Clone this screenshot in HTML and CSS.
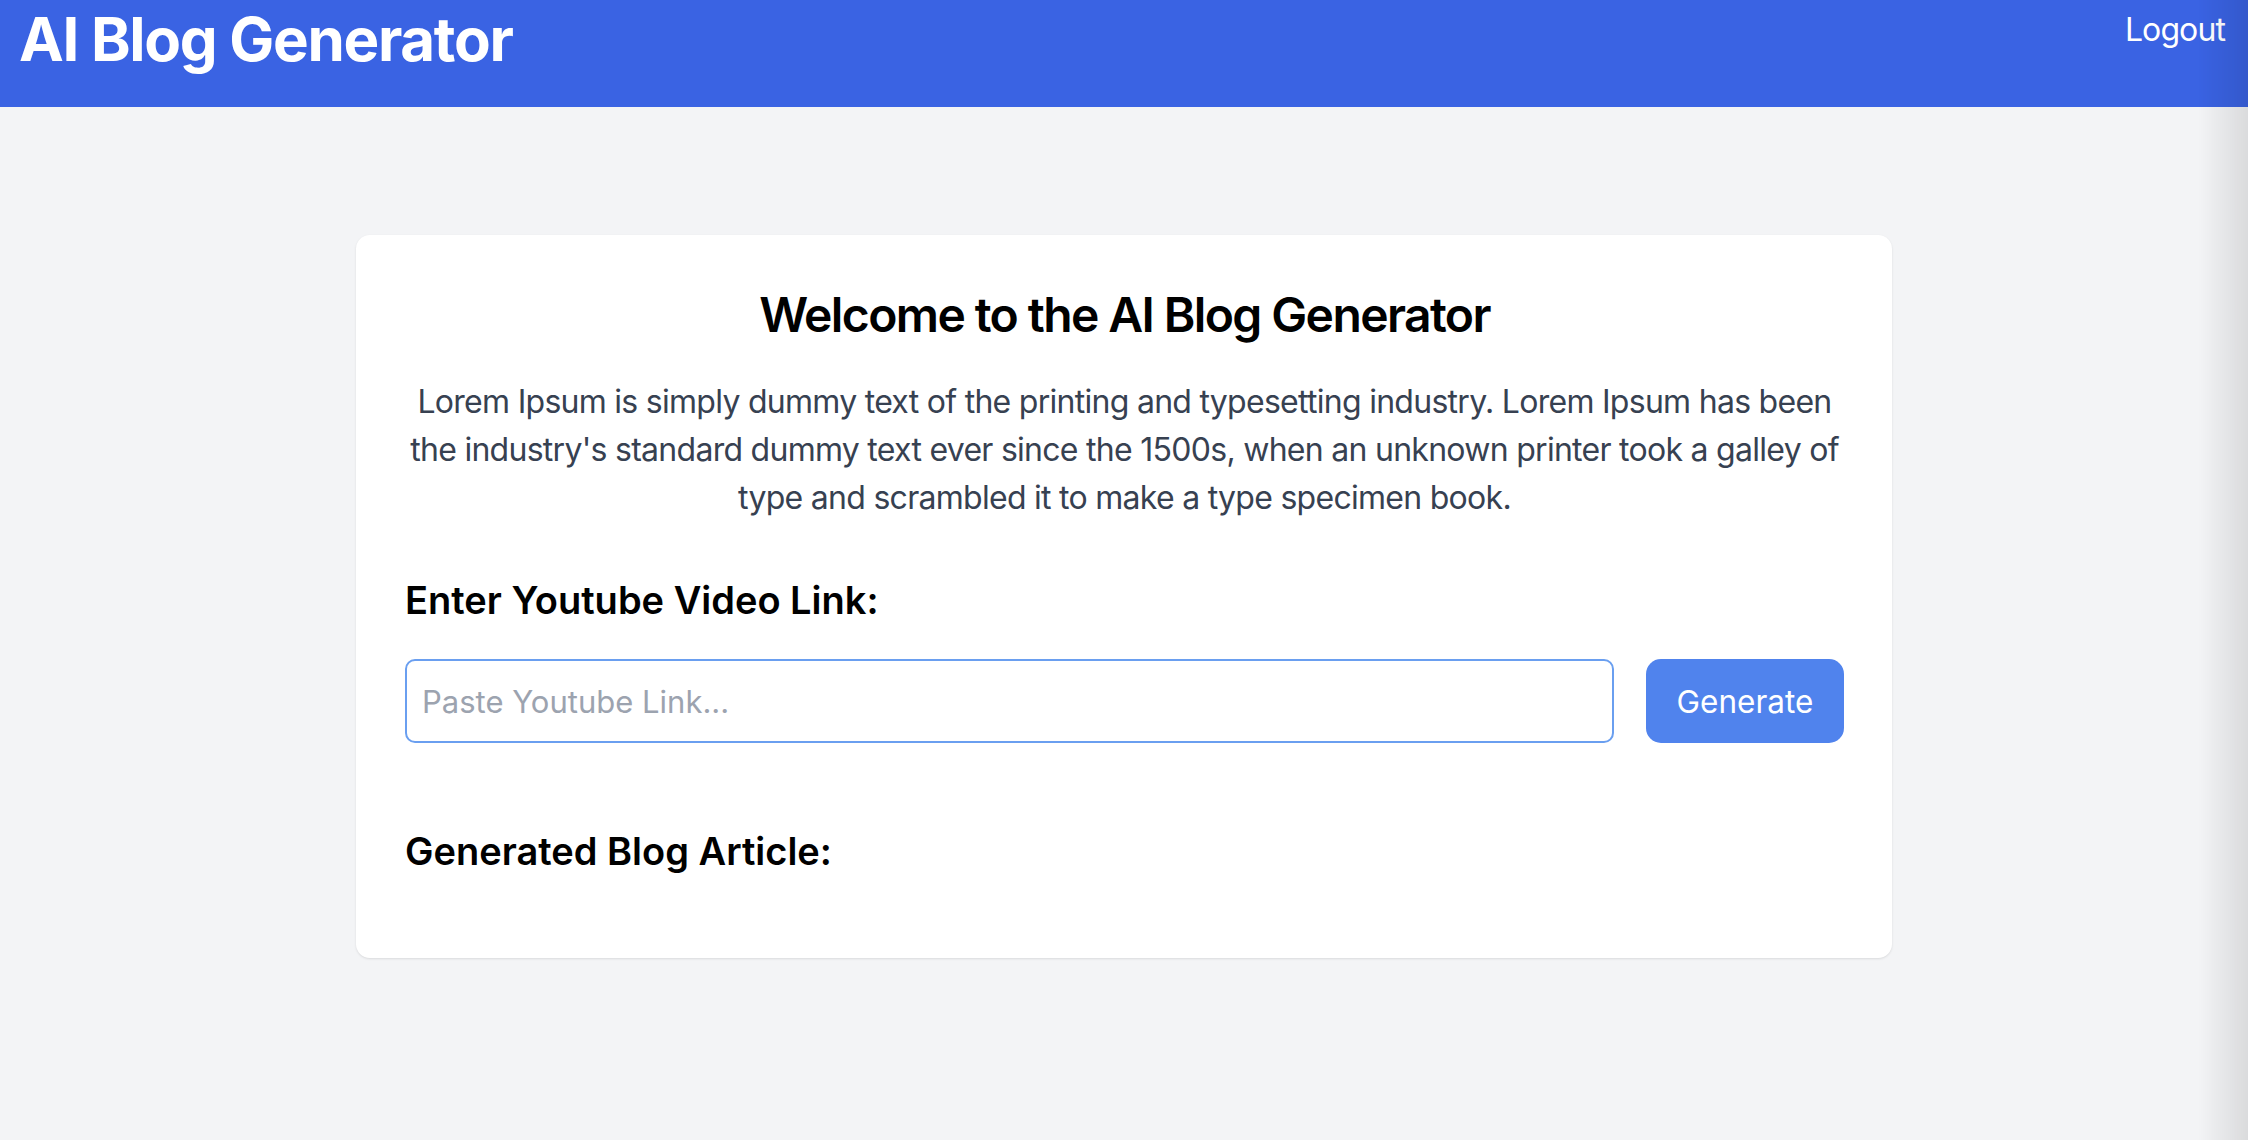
FILE: index.html
```html
<!DOCTYPE html>
<html lang="en">
<head>
<meta charset="utf-8">
<title>AI Blog Generator</title>
<link rel="stylesheet" href="styles.css">
</head>
<body>
<header class="topbar">
  <h1 class="brand">AI Blog Generator</h1>
  <a class="logout" href="#">Logout</a>
</header>
<main class="page">
  <section class="card">
    <h2 class="welcome">Welcome to the AI Blog Generator</h2>
    <p class="intro">Lorem Ipsum is simply dummy text of the printing and typesetting industry. Lorem Ipsum has been the industry's standard dummy text ever since the 1500s, when an unknown printer took a galley of type and scrambled it to make a type specimen book.</p>
    <h3 class="label">Enter Youtube Video Link:</h3>
    <div class="form-row">
      <input class="link-input" type="text" placeholder="Paste Youtube Link...">
      <button class="gen-btn" type="button">Generate</button>
    </div>
    <h3 class="label label-article">Generated Blog Article:</h3>
    <div class="article"></div>
  </section>
</main>
<div class="edge-shade"></div>
</body>
</html>
```
FILE: styles.css
```css
* { box-sizing: border-box; }
html, body { margin: 0; padding: 0; }
body {
  font-family: Inter, "Noto Sans", sans-serif;
  background: #f3f4f6;
  min-height: 1140px;
  color: #000;
}
.topbar {
  height: 107px;
  background: #3a63e3;
  display: flex;
  justify-content: space-between;
  align-items: flex-start;
  padding: 3px 23px 0 19px;
}
.brand {
  margin: 0;
  font-size: 60px;
  font-weight: 700;
  line-height: normal;
  color: #fff;
  letter-spacing: -1.3px;
}
.logout {
  margin-top: 7px;
  font-size: 32px;
  line-height: normal;
  color: #fff;
  text-decoration: none;
  letter-spacing: -0.9px;
}
.page {
  display: flex;
  justify-content: center;
  padding-top: 128px;
}
.card {
  width: 1536px;
  background: #fff;
  border-radius: 14px;
  box-shadow: 0 1px 3px rgba(0,0,0,0.07), 0 1px 2px rgba(0,0,0,0.04);
  padding: 51px 48px 49px 49px;
  display: flex;
  flex-direction: column;
}
.welcome {
  margin: 0;
  text-align: center;
  font-size: 48px;
  font-weight: 600;
  line-height: 58px;
  letter-spacing: -1.6px;
  color: #000;
}
.intro {
  margin: 34px 0 0;
  text-align: center;
  font-size: 32px;
  line-height: 48px;
  letter-spacing: -0.72px;
  color: #374151;
}
.label {
  margin: 55px 0 0;
  font-size: 38px;
  font-weight: 600;
  line-height: 46px;
  color: #000;
}
.form-row {
  margin-top: 36px;
  display: flex;
  gap: 32px;
}
.link-input {
  flex: 1;
  height: 84px;
  border: 2px solid #6a9ff0;
  border-radius: 10px;
  padding: 0 15px;
  font-family: inherit;
  font-size: 31px;
  color: #111827;
  outline: none;
}
.link-input::placeholder { color: #9ca3af; }
.gen-btn {
  width: 198px;
  height: 84px;
  border: none;
  border-radius: 15px;
  background: #5083ed;
  color: #fff;
  font-family: inherit;
  font-size: 31.5px;
  cursor: pointer;
}
.label-article { margin-top: 85px; }
.article { height: 35px; }
.edge-shade {
  position: fixed;
  top: 0;
  right: 0;
  width: 50px;
  height: 100%;
  pointer-events: none;
  background: linear-gradient(to right, rgba(0,0,0,0), rgba(0,0,0,0.1));
}
```
